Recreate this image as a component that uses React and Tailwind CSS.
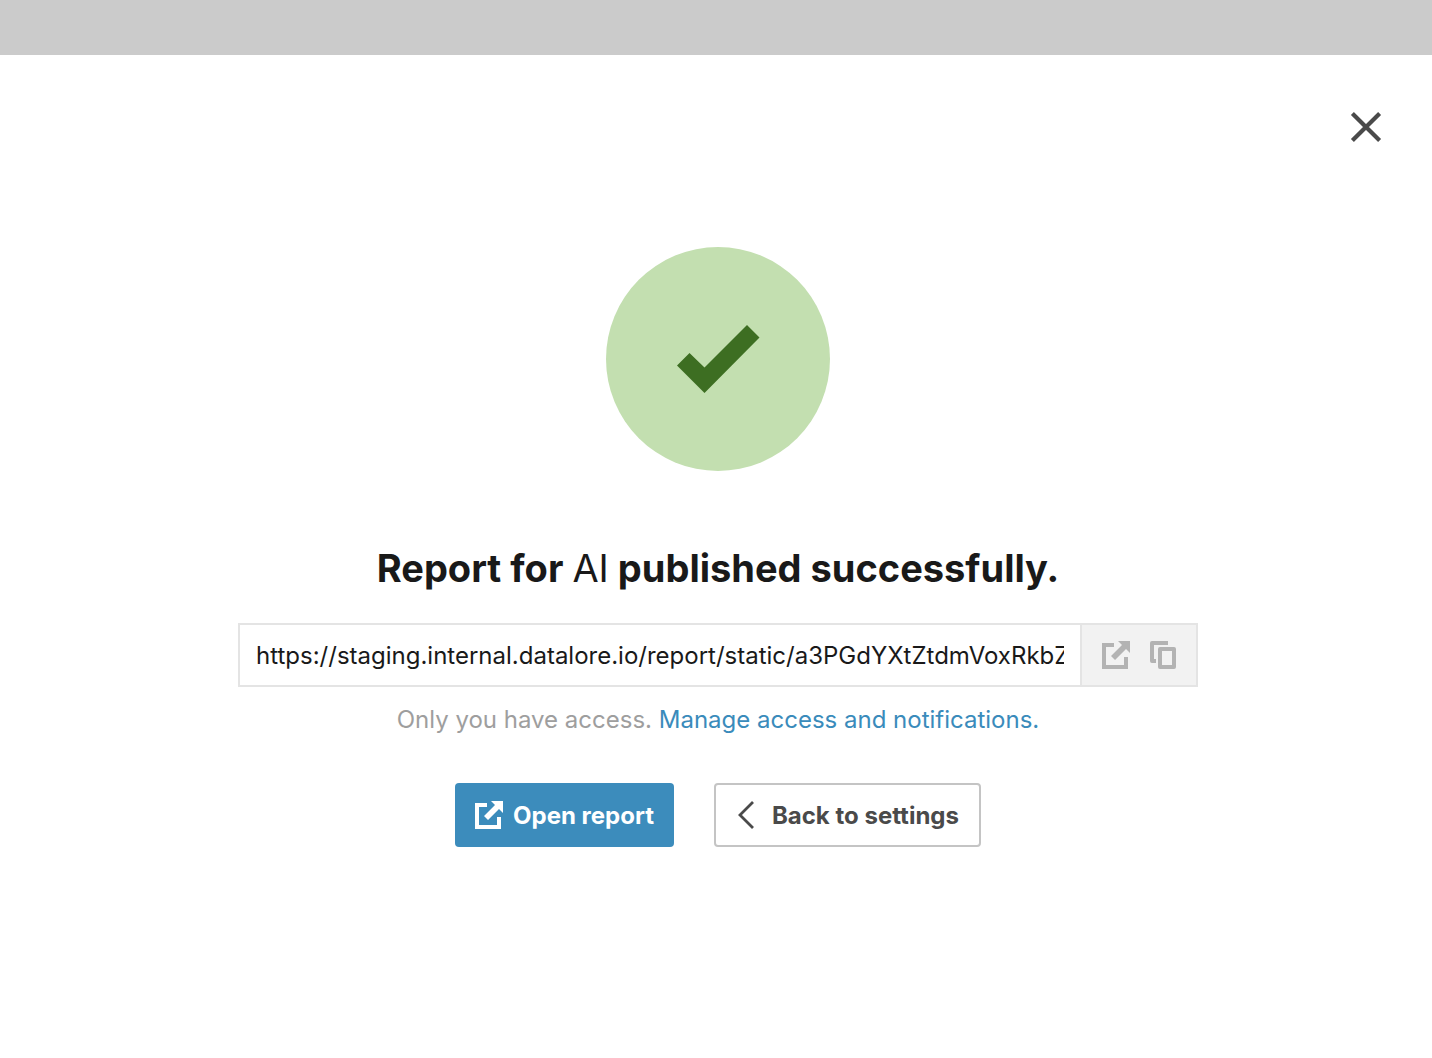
import React, { useState } from 'react';

const REPORT_URL = 'https://staging.internal.datalore.io/report/static/a3PGdYXtZtdmVoxRkbZq7';

const CloseIcon = () => (
  <svg className="h-8 w-8" viewBox="0 0 32 32" fill="none" stroke="currentColor" strokeWidth="4.2" strokeLinecap="butt">
    <path d="M2.4 2.4l27.2 27.2M29.6 2.4L2.4 29.6" />
  </svg>
);

const CheckIcon = () => (
  <svg className="h-17 w-21" viewBox="0 0 84 68" fill="currentColor">
    <path d="M13.5 28L1 40.5 28.5 68 83.5 12.5 71 0 28.5 42.5z" />
  </svg>
);

const ExternalIcon = () => (
  <svg className="size-7 shrink-0" viewBox="0 0 28 28" fill="currentColor">
    <path d="M12 2H0v26h26V16h-4v8H4V6h8z" />
    <path d="M16 0h12v12l-4-4L13 19l-4-4L20 4z" />
  </svg>
);

const CopyIcon = () => (
  <svg className="size-7 shrink-0" viewBox="0 0 28 28" fill="currentColor">
    <path d="M18 0H2a2 2 0 0 0-2 2v18a2 2 0 0 0 2 2h4v-4H4V4h14z" />
    <path fillRule="evenodd" d="M10 6h14a2 2 0 0 1 2 2v18a2 2 0 0 1-2 2H10a2 2 0 0 1-2-2V8a2 2 0 0 1 2-2zm2 4v14h10V10z" />
  </svg>
);

const BackIcon = () => (
  <svg className="h-7 w-5 shrink-0" viewBox="0 0 20 28" fill="none" stroke="currentColor" strokeWidth="2.8">
    <path d="M17 1L4 14l13 13" />
  </svg>
);

export default function App() {
  const [open, setOpen] = useState(true);

  const openReport = () => window.open(REPORT_URL, '_blank');
  const copyLink = () => navigator.clipboard?.writeText(REPORT_URL);

  return (
    <div className="min-h-screen bg-[#cbcbcb] pt-[55px] font-['Inter',sans-serif] text-[#191919]">
      {open && (
        <main className="min-h-[calc(100vh-55px)] bg-white">
          <div className="flex justify-end pt-14 pr-[50px]">
            <button type="button" aria-label="Close" className="text-[#4a4a4a]" onClick={() => setOpen(false)}>
              <CloseIcon />
            </button>
          </div>

          <div className="flex flex-col items-center pt-[104px] pb-16 pl-1">
            <div className="flex size-56 items-center justify-center rounded-full bg-[#c3dfb0] text-[#3d6e22]">
              <CheckIcon />
            </div>

            <h1 className="mt-[73px] text-[38px] leading-12 font-bold">
              Report for <span className="font-normal">AI</span> published successfully.
            </h1>

            <div className="mt-[31px] flex h-16 w-full max-w-[960px] border-2 border-[#e4e4e4]">
              <input
                type="text"
                readOnly
                aria-label="Report link"
                value={REPORT_URL}
                className="min-w-0 flex-1 px-4 pt-0.5 text-2xl outline-none"
              />
              <div className="flex items-center gap-5 border-l-2 border-[#e4e4e4] bg-[#f2f2f2] pr-[18px] pl-5 text-[#b3b3b3]">
                <button type="button" aria-label="Open link" onClick={openReport}>
                  <ExternalIcon />
                </button>
                <button type="button" aria-label="Copy link" onClick={copyLink}>
                  <CopyIcon />
                </button>
              </div>
            </div>

            <p className="mt-4 text-2xl leading-[34px] text-[#9e9e9e]">
              Only you have access.{' '}
              <a href="#access" className="text-[#3a8bbb]">Manage access and notifications.</a>
            </p>

            <div className="mt-[46px] flex gap-10 text-2xl font-bold">
              <button
                type="button"
                className="flex h-16 items-center gap-2.5 rounded bg-[#3c8cbc] px-5 text-white"
                onClick={openReport}
              >
                <ExternalIcon />
                <span className="pt-0.5">Open report</span>
              </button>
              <button
                type="button"
                className="flex h-16 items-center gap-4 rounded border-2 border-[#c4c4c4] px-5 text-[#4a4a4a]"
                onClick={() => setOpen(false)}
              >
                <BackIcon />
                <span className="pt-0.5">Back to settings</span>
              </button>
            </div>
          </div>
        </main>
      )}
    </div>
  );
}
